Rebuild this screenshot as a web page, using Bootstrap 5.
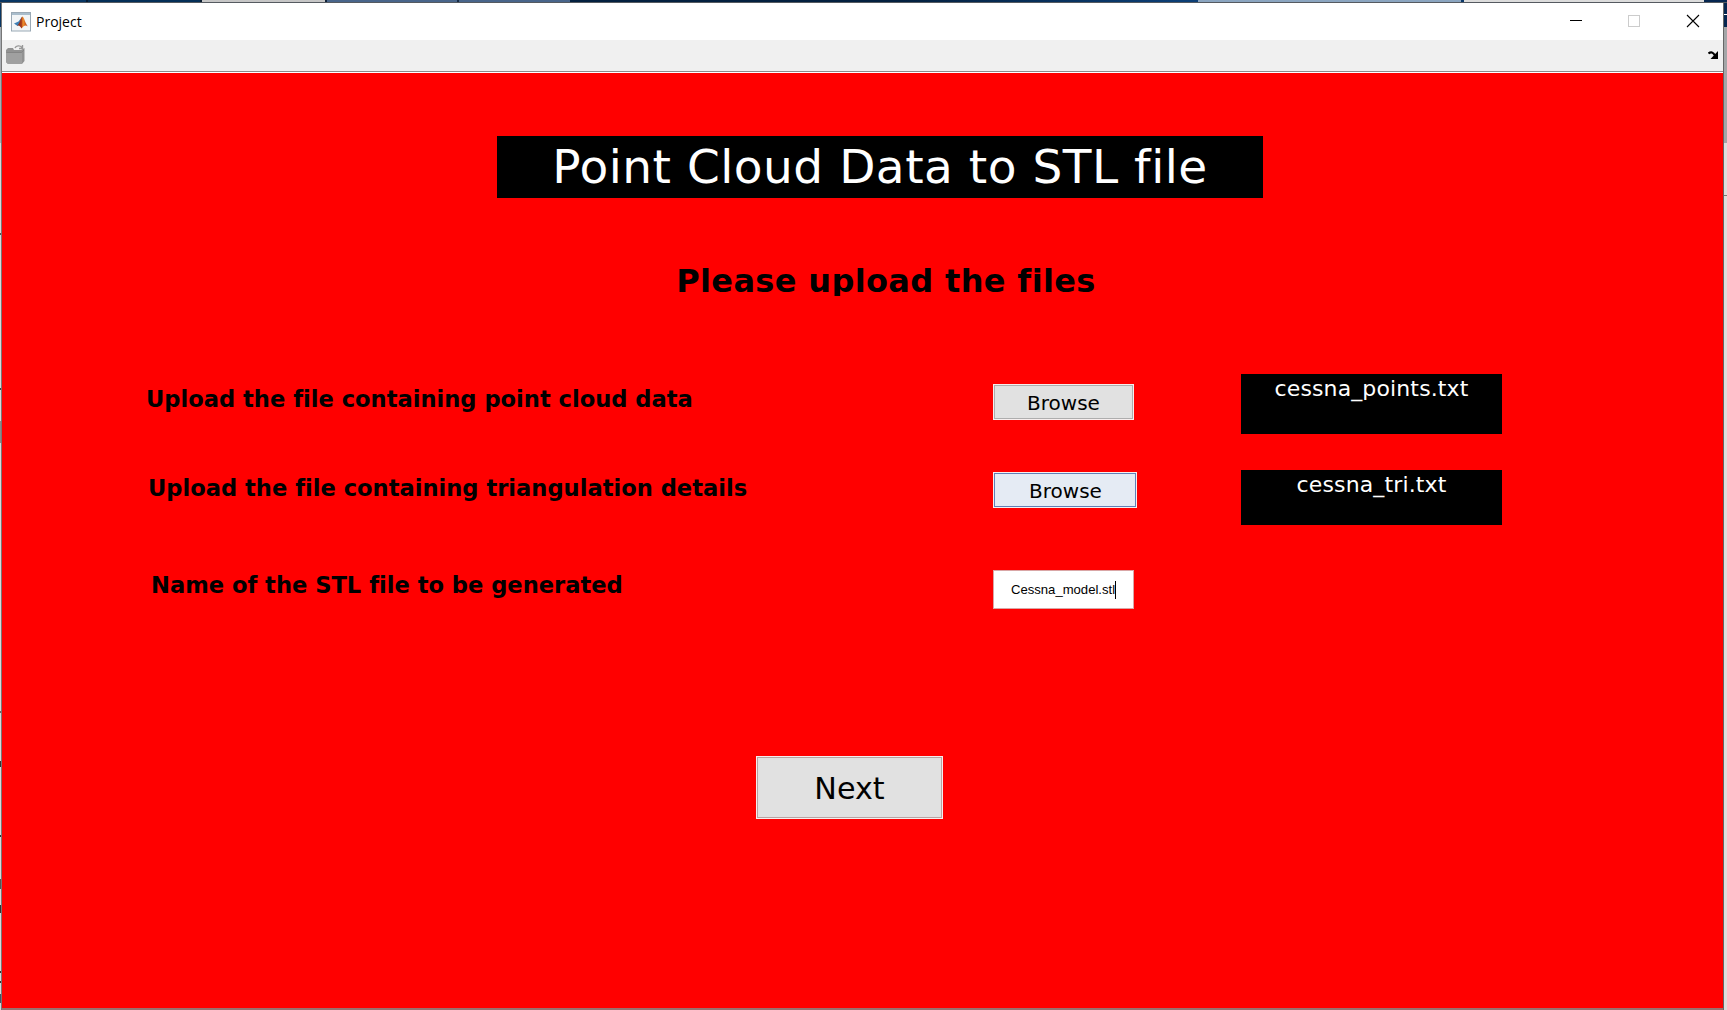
<!DOCTYPE html>
<html lang="en">
<head>
<meta charset="utf-8">
<meta name="viewport" content="width=device-width, initial-scale=1">
<title>Project</title>
<link href="https://cdn.jsdelivr.net/npm/bootstrap@5.3.0/dist/css/bootstrap.min.css" rel="stylesheet">
<style>
body{width:1727px;height:1010px;overflow:hidden;background:#d3d3d3;font-family:"DejaVu Sans",Verdana,sans-serif;color:#000;line-height:1;font-variant-ligatures:none}
.desk-top{height:3px;background:linear-gradient(90deg,#083663 0 86px,#061c33 86px 88px,#042f57 88px 200px,#0a1c30 200px 202px,#c6c6c6 202px 325px,#102238 325px 327px,#48658a 327px 457px,#152a44 457px 459px,#48658a 459px 570px,#03203f 570px 900px,#0b3e75 1180px 1198px,#8ba5c0 1198px 1461px,#0b3768 1461px 1464px,#dcdcdc 1464px 1704px,#052650 1704px);border-bottom:1px solid #555a60}
.desk-left{width:2px;background:linear-gradient(#083663 0 24px,#a9adb2 24px 140px,#d8d8d8 140px 230px,#555 230px 232px,#d8d8d8 232px 385px,#444 385px 387px,#d8d8d8 387px 418px,#8a8a8a 418px 440px,#d8d8d8 440px 708px,#666 708px 710px,#d8d8d8 710px 758px,#333 758px 764px,#d8d8d8 764px 832px,#333 832px 834px,#d8d8d8 834px 876px,#555 876px 886px,#d8d8d8 886px 902px,#333 902px 910px,#d8d8d8 910px 968px,#333 968px 970px,#d8d8d8 970px 978px,#333 978px 980px,#d8d8d8 980px 991px,#456 991px 1000px,#d8d8d8 1000px);border-right:1px solid #777}
.desk-right{width:4px;background:linear-gradient(#052650 0 11px,#fff 11px 12px,#052650 12px 24px,#a4a6a8 24px 140px,#dedede 140px 192px,#777 192px 193px,#dedede 193px);border-left:1px solid #666}
.titlebar{height:37px;background:#fff;padding:0 8px 0 9px}
.win-name{font:14px "Open Sans","Noto Sans",sans-serif;margin-left:5px;line-height:36px}
.toolbar{height:33px;background:#f0f0f0;border-bottom:1px solid #fff;box-shadow:inset 0 -1px #8c8c8c;padding:4px 3px}
.canvas{background:#f00;padding-top:63px}
.banner{width:766px;height:62px;margin-left:495px;background:#000;color:#fff;font-size:47px;letter-spacing:.5px;line-height:61px;white-space:nowrap}
.subhead{width:440px;height:33px;margin:65px 0 0 664px;overflow:hidden;font-size:32px;font-weight:700;letter-spacing:.35px;line-height:36px;white-space:nowrap}
.field-row{white-space:nowrap}
.caption{width:991px;font-size:22.6px;font-weight:700;line-height:26px}
.r1{height:60px;margin-top:78px}.r2{height:55px;margin-top:36px}.r3{height:39px;margin-top:45px}
.r1 .caption{padding:12px 0 0 144px}.r2 .caption{padding:5px 0 0 146px}.r3 .caption{padding:2px 0 0 149px}
.push{height:36px;padding:0;border-radius:0;border:1px solid #f6eeee;background:#e1e1e1!important;box-shadow:inset 0 0 0 1px #adadad;font-size:20px;line-height:36px;color:#000}
.b1{width:141px;margin:10px 107px 0 0}
.b2{width:144px;margin:2px 104px 0 0;padding-left:1px;background:#e5ebf4!important;box-shadow:inset 0 0 0 1px #5f7fb8}
.b3{width:187px;height:63px;margin:147px 0 0 754px;font-size:30.2px;line-height:63px;box-shadow:inset 0 0 0 1px #b9a3a3}
.filebox{width:261px;background:#000;color:#fff;font-size:22px;letter-spacing:.13px;line-height:30px}
.namebox{width:141px;height:39px;border:1px solid #d9a6a6;background:#fff;font:13.1px/37px "Liberation Sans",Arial,sans-serif;padding-left:17px}
.caret{width:1px;height:18px;background:#000}
.win-edge{height:2px;background:#99706f}
</style>
<script src="https://cdn.jsdelivr.net/npm/bootstrap@5.3.0/dist/js/bootstrap.bundle.min.js"></script>
</head>
<body class="d-flex flex-column">
<div class="desk-top flex-shrink-0"></div>
<div class="d-flex flex-grow-1">
  <div class="desk-left flex-shrink-0"></div>
  <main class="d-flex flex-column flex-grow-1">
    <header class="titlebar d-flex align-items-center">
      <svg width="20" height="20" viewBox="0 0 20 20"><defs><linearGradient id="peak" x1="0" x2="1"><stop offset="0" stop-color="#7a2a18"/><stop offset=".4" stop-color="#a83a1c"/><stop offset=".55" stop-color="#f0912c"/><stop offset="1" stop-color="#b03316"/></linearGradient></defs><rect x=".5" y=".5" width="19" height="18.5" fill="#f2f5f7" stroke="#9aa9b5"/><path d="M1 2H19" stroke="#a9bdcc" stroke-width="2"/><path d="M3 11.500L7.500 9.500 11 5 10 11 6.500 14Z" fill="#3c7fb5"/><path d="M6 13.500C9 12 9.500 5 11.500 4.500 13.500 6 14.500 12 17 14.500 14.500 12.500 13 13.500 10.500 16.500 9.500 14.500 8.500 13 6 13.500Z" fill="url(#peak)"/></svg>
      <span class="win-name">Project</span>
      <svg class="ms-auto" width="150" height="37" viewBox="1565 0 150 37" fill="none"><path d="M1570 17.500H1582" stroke="#000"/><rect x="1628.500" y="12.500" width="11" height="11" stroke="#ccc"/><path d="M1687 12L1699 24M1699 12L1687 24" stroke="#000" stroke-width="1.100"/></svg>
    </header>
    <div class="toolbar d-flex">
      <svg width="22" height="22" viewBox="0 0 22 22"><path d="M1 6L3 4H8L9 6H16L19.500 4V17L17 20H3L1 18Z" fill="#929292"/><path d="M1 9H17V20H3L1 18Z" fill="#a0a0a0"/><path d="M1.500 8.500H16.500L19 6" fill="none" stroke="#858585"/><path d="M10 4C11 1.500 15 1 17 3.500M17.500 1V4.500H14" fill="none" stroke="#999" stroke-width="1.400"/></svg>
      <svg class="ms-auto" width="12" height="22" viewBox="0 0 12 22"><path d="M.5 9.500C3 7.500 5 8 7 11.500" fill="none" stroke="#000" stroke-width="2.200"/><path d="M10 7V15H2.500Z" fill="#000"/></svg>
    </div>
    <section class="canvas flex-grow-1">
      <h1 class="banner mb-0 fw-normal text-center">Point Cloud Data to STL file</h1>
      <div class="subhead text-center">Please upload the files</div>
      <div class="field-row r1 d-flex">
        <div class="caption">Upload the file containing point cloud data</div>
        <button class="btn push b1">Browse</button>
        <div class="filebox text-center">cessna_points.txt</div>
      </div>
      <div class="field-row r2 d-flex">
        <div class="caption">Upload the file containing triangulation details</div>
        <button class="btn push b2">Browse</button>
        <div class="filebox text-center">cessna_tri.txt</div>
      </div>
      <div class="field-row r3 d-flex">
        <div class="caption">Name of the STL file to be generated</div>
        <div class="namebox d-flex align-items-center"><span>Cessna_model.stl</span><span class="caret"></span></div>
      </div>
      <button class="btn push b3 d-block">Next</button>
    </section>
    <div class="win-edge"></div>
  </main>
  <div class="desk-right flex-shrink-0"></div>
</div>
</body>
</html>
